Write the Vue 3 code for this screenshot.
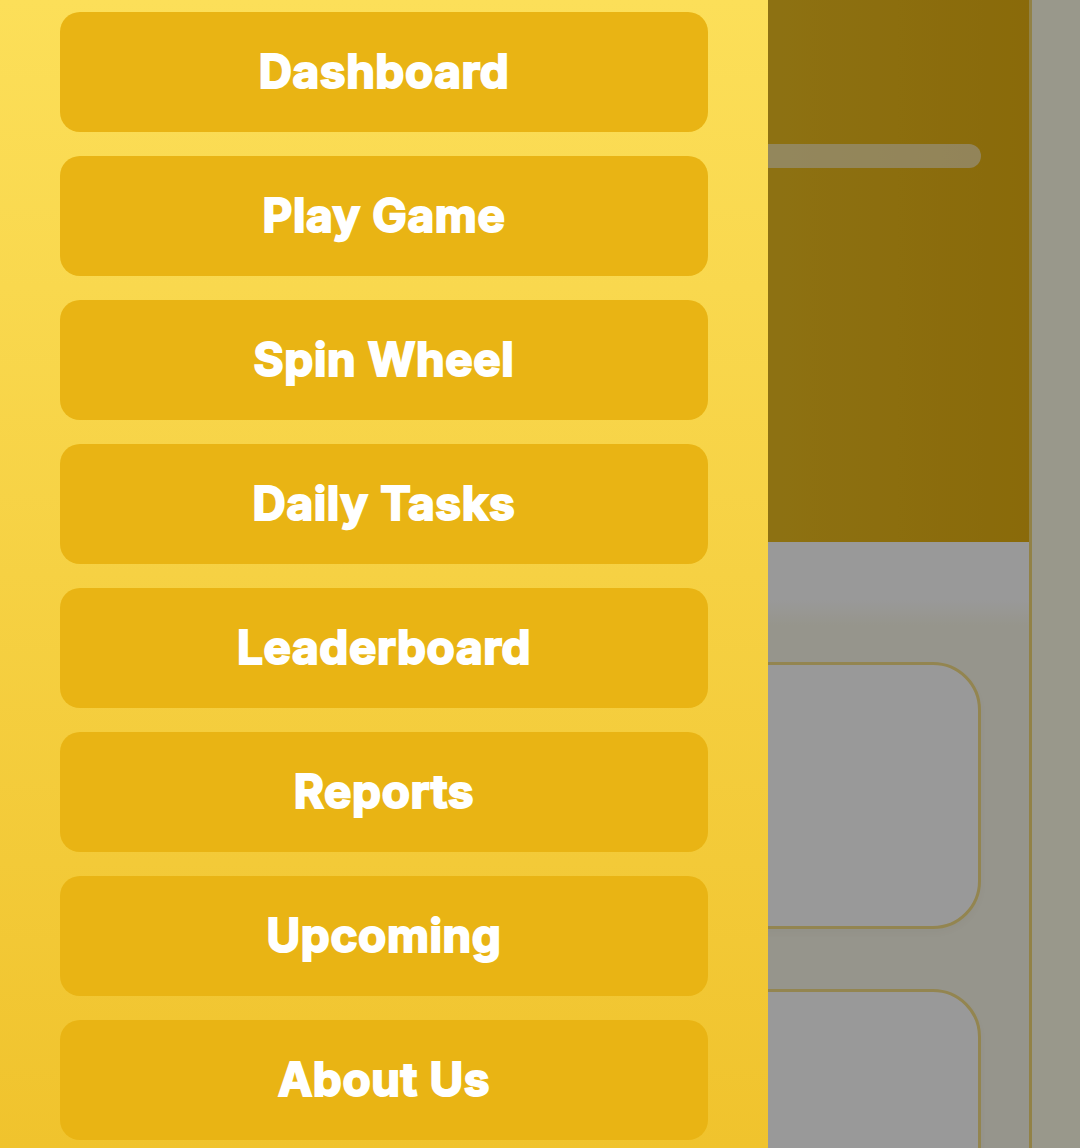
<script setup>
const links = ['Dashboard', 'Play Game', 'Spin Wheel', 'Daily Tasks', 'Leaderboard', 'Reports', 'Upcoming', 'About Us']
</script>

<template>
  <div class="viewport">
    <div class="page">
      <main class="panel">
        <section class="hero">
          <div class="progress"></div>
        </section>
        <section class="cards">
          <div class="card"></div>
          <div class="card"></div>
        </section>
      </main>
    </div>
    <div class="overlay"></div>
    <nav class="drawer">
      <a v-for="link in links" :key="link" class="link"><span class="label">{{ link }}</span></a>
    </nav>
  </div>
</template>

<style>
html, body { margin: 0; overflow: hidden; }
</style>

<style scoped>
.viewport {
  position: relative;
  width: 1080px;
  height: 1148px;
  overflow: hidden;
  background: #fffee8;
}
.page { width: 1032px; height: 100%; }
.panel {
  height: 100%;
  box-sizing: border-box;
  border-right: 3px solid #f3d975;
  background: linear-gradient(180deg, #ffffff 600px, #fbf9ea 625px);
  overflow: hidden;
}
.hero {
  height: 542px;
  box-sizing: border-box;
  padding: 144px 48px 0;
  background: linear-gradient(90deg, #fde047 0%, #e6b111 100%);
}
.progress {
  height: 24px;
  border-radius: 12px;
  background: rgba(255, 255, 255, 0.55);
}
.cards {
  display: flex;
  flex-direction: column;
  gap: 60px;
  padding: 120px 48px 0;
}
.card {
  flex: none;
  height: 267px;
  box-sizing: border-box;
  border: 3px solid #f5de85;
  border-radius: 48px;
  background: #ffffff;
  box-shadow: 0 4px 12px rgba(0, 0, 0, 0.035);
}
.overlay {
  position: absolute;
  inset: 0;
  background: rgba(0, 0, 0, 0.4);
}
.drawer {
  position: absolute;
  top: 0;
  left: 0;
  bottom: 0;
  width: 768px;
  box-sizing: border-box;
  padding: 12px 60px 0;
  display: flex;
  flex-direction: column;
  gap: 24px;
  background: linear-gradient(180deg, #fcdf59 0%, #f0c32d 100%);
}
.link {
  flex: none;
  height: 120px;
  display: flex;
  align-items: center;
  justify-content: center;
  border-radius: 20px;
  background: #e9b414;
  color: #ffffff;
  font-family: "Inter", "Lato", sans-serif;
  font-weight: 700;
  font-size: 46px;
  letter-spacing: 0.6px;
  -webkit-text-stroke: 2px #ffffff;
}
.label { margin-top: -2px; }
</style>
